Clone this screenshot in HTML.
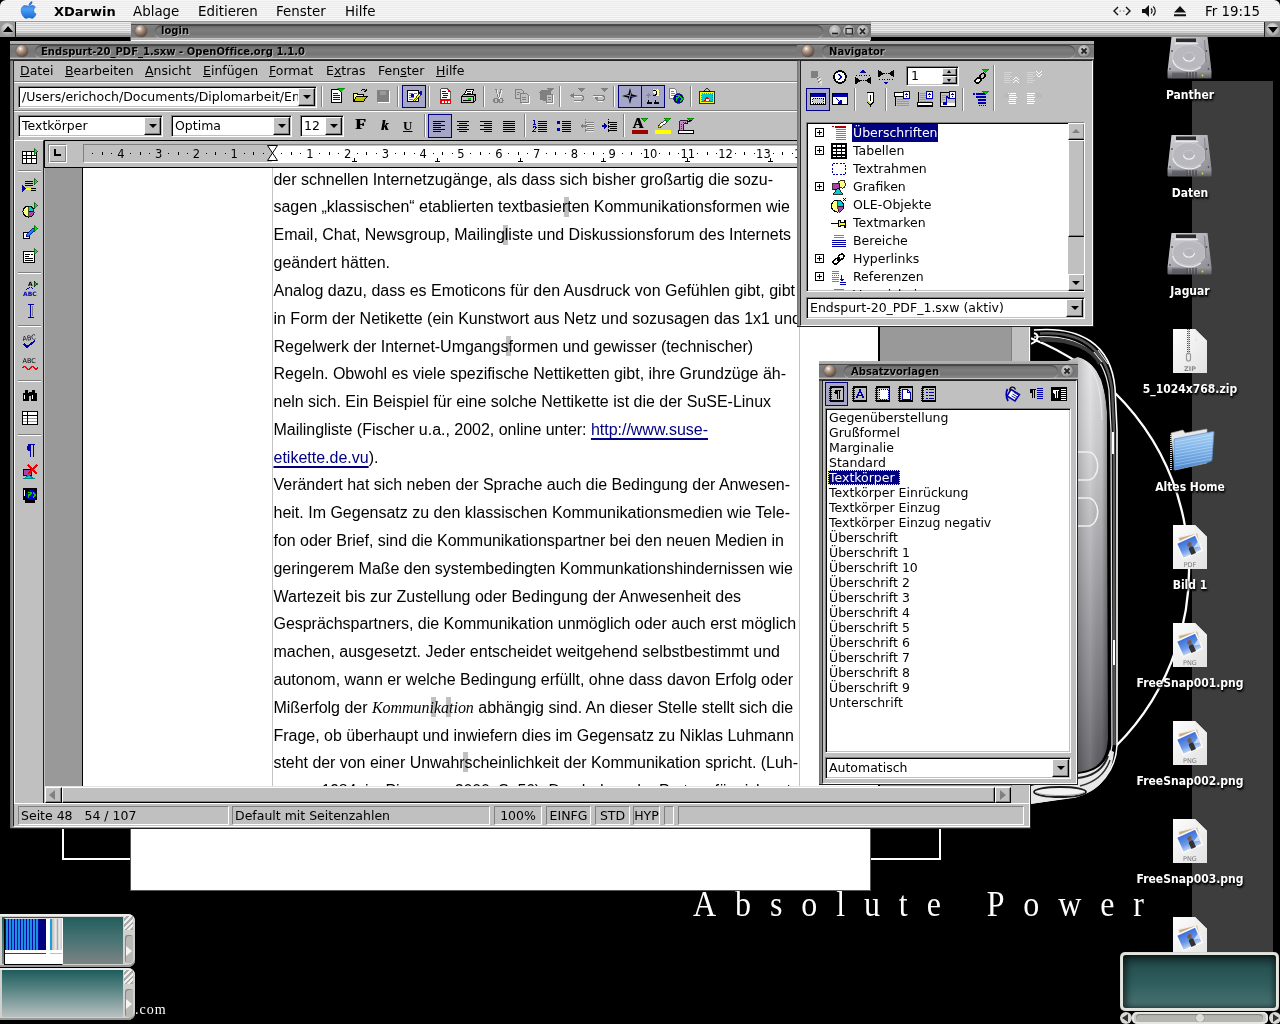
<!DOCTYPE html>
<html lang="de">
<head>
<meta charset="utf-8">
<title>XDarwin - OpenOffice.org 1.1.0</title>
<style>
*{box-sizing:border-box;margin:0;padding:0}
html,body{width:1280px;height:1024px;overflow:hidden;background:#000}
body{position:relative;font-family:"DejaVu Sans","Liberation Sans",sans-serif;font-size:13px;color:#000}
.a{position:absolute}
#main,#nav,#sty,#desk,#wall,#mbar,#login{will-change:transform}
.ui{font-family:"DejaVu Sans","Liberation Sans",sans-serif;font-size:12.5px;white-space:nowrap;line-height:16px}
.face{background:#c0c0c0}
.sunk{border:1px solid;border-color:#808080 #fff #fff #808080;box-shadow:inset 1px 1px 0 #000,inset -1px -1px 0 #c0c0c0;background:#fff}
.sunk1{border:1px solid;border-color:#808080 #fff #fff #808080}
.rais{border:1px solid;border-color:#fff #000 #000 #fff;box-shadow:inset -1px -1px 0 #808080;background:#c0c0c0}
.hsep{height:2px;border-top:1px solid #808080;border-bottom:1px solid #fff}
.vsep{width:2px;border-left:1px solid #808080;border-right:1px solid #fff}
.pressed{background:#a6a6c8;border:1px solid #000080}
.tbar{background:linear-gradient(#b4b4b4 0,#a8a8a8 3px,#4a4a4a 3px,#4a4a4a 4px,#808080 4px,#767676 10px,#7c7c7c 16px,#b0b0b0 17px,#c8c8c8 18px,#3c3c3c 18px,#3c3c3c 19px)}
.pill{background:linear-gradient(#6a6a6a,#7e7e7e 40%,#747474 70%,#8a8a8a);border-radius:7px;box-shadow:inset 0 1px 1px #444,0 1px 0 #c4c4c4}
.ttl{font-family:"DejaVu Sans","Liberation Sans",sans-serif;font-weight:bold;font-size:10px;line-height:12px;white-space:nowrap;color:#000;text-shadow:1px 1px 0 #b8b8b8;letter-spacing:.03px}
.ball{border-radius:50%;background:radial-gradient(circle at 36% 30%,#fff 0,#dccabc 12%,#a88e7e 34%,#6e5a4e 64%,#2e2420 100%);box-shadow:0 0 1px #222}
.xbtn{border-radius:50%;background:radial-gradient(circle at 40% 35%,#d8d8d8 0,#a8a8a8 50%,#5a5a5a 100%);box-shadow:0 0 1px #222}
.doc{font-family:"Liberation Sans",sans-serif;font-size:16px;line-height:28px;white-space:nowrap;color:#000}
.mm{font-family:"DejaVu Sans","Liberation Sans",sans-serif;font-size:13.4px;line-height:22px;white-space:nowrap;color:#000}
.lbl{font-family:"DejaVu Sans Condensed","DejaVu Sans","Liberation Sans",sans-serif;font-weight:bold;font-size:12px;line-height:14px;color:#fff;white-space:nowrap;text-align:center;text-shadow:1px 2px 2px #000,0 1px 1px #000}
</style>
</head>
<body>
<!-- WALLPAPER -->
<div id="wall" class="a" style="left:0;top:0;width:1280px;height:1024px;background:#000">
<div class="a" style="left:1192px;top:81px;width:81px;height:881px;background:#3d3d3d"></div>
<div class="a" style="left:62px;top:100px;width:879px;height:760px;border:2px solid #fff"></div>
<svg class="a" style="left:1020px;top:320px" width="200" height="520" viewBox="1020 320 200 520">
<defs>
<linearGradient id="dv" x1="0" x2="0" y1="0" y2="1"><stop offset="0" stop-color="#e2e2e4"/><stop offset=".2" stop-color="#d2d2d4"/><stop offset=".5" stop-color="#a8a8ac"/><stop offset=".8" stop-color="#7c7c82"/><stop offset="1" stop-color="#5c5c62"/></linearGradient>
<linearGradient id="dv2" gradientUnits="userSpaceOnUse" x1="1076" x2="1108" y1="0" y2="0"><stop offset="0" stop-color="#000" stop-opacity=".18"/><stop offset=".45" stop-color="#fff" stop-opacity=".12"/><stop offset=".8" stop-color="#000" stop-opacity=".05"/><stop offset="1" stop-color="#000" stop-opacity=".35"/></linearGradient>
</defs>
<path d="M1031 338.200 A249 249 0 0 1 1116 746" fill="none" stroke="#fff" stroke-width="2.300"/>
<path d="M1030 375 L1078 357 C1096 362 1105 380 1107 412 L1108 740 C1106 762 1096 770 1078 772 L1030 772 Z" fill="url(#dv)"/>
<path d="M1030 375 L1078 357 C1096 362 1105 380 1107 412 L1108 740 C1106 762 1096 770 1078 772 L1030 772 Z" fill="url(#dv2)"/>
<path d="M1084 361 C1098 372 1101 395 1102 420" fill="none" stroke="#f4f4f4" stroke-width="1" opacity=".7"/>
<path d="M1078 357 L1088 343 C1102 350 1112 366 1115 388 L1117 430 L1117 747 L1106 760 L1108 740 L1107 412 C1105 380 1096 362 1078 357 Z" fill="#000"/>
<!-- glass shell right edge -->
<path d="M1034 330 C1080 326 1111 344 1115 388 L1117 430 L1117 745 C1116 770 1100 790 1075 797 L1031 803" fill="none" stroke="#fff" stroke-width="1.600"/>
<path d="M1034 337 C1076 334 1103 349 1109 390 L1111 430 L1112 745 C1110 765 1098 778 1078 782" fill="none" stroke="#e0e0e0" stroke-width="1.300"/>
<path d="M1040 333.500 C1080 331 1106 347 1112 389 L1114 430 L1114.500 745" fill="none" stroke="#555" stroke-width="2.500"/>
<path d="M1113 432v22M1114 640v25" stroke="#fff" stroke-width="2"/>
<path d="M1034 333 q6 2 2 8 l-5 3" fill="none" stroke="#fff" stroke-width="2"/>
<path d="M1040 340 C1072 338 1094 350 1100 364" fill="none" stroke="#3a3a3a" stroke-width="4"/>
<path d="M1094 352 l8 10 M1098 350 l10 14" stroke="#ddd" stroke-width="1.200"/>
<path d="M1078 452 h10 a9 13 0 0 1 0 28 h-10 M1078 498 h10 a9 13 0 0 1 0 28 h-10" fill="none" stroke="#f0f0f0" stroke-width="1.500"/>
<!-- base -->
<path d="M1031 786 L1078 774 C1096 772 1106 764 1110 750 L1114 752 C1112 776 1098 792 1076 797 L1031 804 Z" fill="#e8e8e8"/>
<path d="M1078 778 C1094 776 1104 768 1108 756" fill="none" stroke="#222" stroke-width="2"/>
<path d="M1080 786 C1096 782 1106 772 1110 760" fill="none" stroke="#333" stroke-width="1.500"/>
<ellipse cx="1060" cy="792" rx="26" ry="5" fill="#f2f2f2" stroke="#1a1a1a" stroke-width="1.800"/>
<path d="M1036 792 a24 3.500 0 0 0 48 0" fill="none" stroke="#999" stroke-width="1"/>
</svg>
<div class="a" style="left:693px;top:880px;font-family:'Liberation Serif',serif;font-size:32px;line-height:44px;letter-spacing:18.900px;color:#fff;white-space:nowrap;transform:scaleY(1.1);transform-origin:0 0">Absolute Power</div>
<div class="a" style="left:135px;top:1002px;font-family:'Liberation Serif',serif;font-size:14px;line-height:16px;letter-spacing:1px;color:#fff">.com</div>
<!-- pager -->
<div class="a" style="left:0;top:914px;width:135px;height:53px;border-radius:0 7px 7px 0;background:#d0d0cc;box-shadow:inset 0 2px 0 #eee,inset 0 -2px 0 #999"></div>
<div class="a" style="left:2px;top:917px;width:121px;height:47px;background:linear-gradient(#235c5c,#4a7474 50%,#7d8383)"></div>
<div class="a" style="left:0;top:968px;width:135px;height:52px;border-radius:0 7px 7px 0;background:#d0d0cc;box-shadow:inset 0 2px 0 #eee,inset 0 -2px 0 #999"></div>
<div class="a" style="left:2px;top:970px;width:121px;height:47px;background:linear-gradient(#1f5c5c,#5f8888 45%,#b9c0c0)"></div>
<div class="a" style="left:4px;top:918px;width:59px;height:47px;background:#fff;border:1px solid #000;border-right-color:#fff;border-top-color:#ddd"></div>
<div class="a" style="left:5px;top:919px;width:34px;height:31px;background:repeating-linear-gradient(90deg,#0a0aa0 0,#0a0aa0 1.5px,#1e8ee0 1.5px,#1e8ee0 3px)"></div>
<div class="a" style="left:39px;top:919px;width:7px;height:31px;background:#000080"></div>
<div class="a" style="left:50px;top:919px;width:2px;height:31px;background:#19a0d8"></div>
<div class="a" style="left:52px;top:919px;width:10px;height:31px;background:linear-gradient(90deg,#bbb,#eee 40%,#aaa 55%,#eee 70%,#ccc)"></div>
<div class="a" style="left:5px;top:953px;width:41px;height:1px;background:#1840b0"></div>
<div class="a" style="left:50px;top:953px;width:12px;height:1px;background:#9cc"></div>
<div class="a" style="left:124px;top:916px;width:9px;height:14px;background:repeating-linear-gradient(135deg,#eee 0,#eee 2px,#aaa 2px,#aaa 4px)"></div>
<div class="a" style="left:124px;top:970px;width:9px;height:14px;background:repeating-linear-gradient(135deg,#eee 0,#eee 2px,#aaa 2px,#aaa 4px)"></div>
<div class="a" style="left:125px;top:935px;width:8px;height:28px;background:#b8b8b4;border-radius:3px;box-shadow:inset 1px 1px 0 #888"></div>
<div class="a" style="left:125px;top:989px;width:8px;height:28px;background:#b8b8b4;border-radius:3px;box-shadow:inset 1px 1px 0 #888"></div>
<div class="a" style="left:126px;top:946px;width:0;height:0;border:5px solid transparent;border-left:6px solid #f4f4f4;border-right:0"></div>
<div class="a" style="left:126px;top:999px;width:0;height:0;border:5px solid transparent;border-left:6px solid #f4f4f4;border-right:0"></div>
<!-- icon box bottom right -->
<div class="a" style="left:1120px;top:952px;width:159px;height:59px;border-radius:5px;background:#e4e4de;box-shadow:inset 0 0 1px #777"></div>
<div class="a" style="left:1123px;top:955px;width:153px;height:53px;border-radius:3px;background:linear-gradient(#142c2c,#275252 25%,#2f5e5e 55%,#4a7272);box-shadow:inset 4px 0 6px rgba(0,0,0,.5),inset -3px 0 5px rgba(0,0,0,.4)"></div>
<div class="a" style="left:1132px;top:1012px;width:136px;height:12px;border-radius:5px;background:#c8c8c4;box-shadow:inset 0 0 0 2px #e6e6e2"></div>
<div class="a" style="left:1136px;top:1014px;width:127px;height:8px;border-radius:4px;background:#b4b4b0;box-shadow:inset 0 1px 1px #777"></div>
<div class="a" style="left:1196px;top:1014px;width:8px;height:8px;border-radius:50%;background:#ddd;box-shadow:0 0 1px #555"></div>
<div class="a" style="left:1120px;top:1012px;width:12px;height:12px;border-radius:50%;background:#d8d8d4"></div>
<div class="a" style="left:1122px;top:1014px;width:0;height:0;border:4px solid transparent;border-right:6px solid #333;border-left:0"></div>
<div class="a" style="left:1269px;top:1012px;width:12px;height:12px;border-radius:50%;background:#d8d8d4"></div>
<div class="a" style="left:1273px;top:1014px;width:0;height:0;border:4px solid transparent;border-left:6px solid #333;border-right:0"></div>
</div>
<!-- LOGIN WINDOW -->
<div id="login" class="a" style="left:130px;top:22px;width:741px;height:869px;background:#fff;border:1px solid #555;border-top:0">
<div class="a tbar" style="left:0;top:0;width:740px;height:18px;background-position:0 -1px"></div>
<div class="a ball" style="left:4px;top:3px;width:12px;height:12px"></div>
<div class="a pill" style="left:24px;top:3px;width:668px;height:13px"></div>
<div class="a ttl" style="left:30px;top:3px">login</div>
<div class="a xbtn" style="left:698px;top:3px;width:12px;height:12px"></div>
<div class="a xbtn" style="left:712px;top:3px;width:12px;height:12px"></div>
<div class="a xbtn" style="left:726px;top:3px;width:12px;height:12px"></div>
<svg class="a" style="left:698px;top:3px" width="40" height="12" viewBox="0 0 40 12"><path d="M3 8.500h6" stroke="#222" stroke-width="1.600"/><rect x="17" y="3.500" width="6.500" height="5.500" fill="none" stroke="#222" stroke-width="1.200"/><path d="M31 3.500l5 5.500M36 3.500l-5 5.500" stroke="#222" stroke-width="1.800"/></svg>
</div>
<!-- MAIN WINDOW -->
<div id="main" class="a" style="left:0;top:0;width:0;height:0">
<div class="a " style="left:10px;top:41px;width:1021px;height:788px;background:linear-gradient(90deg,#6e6e6e,#9c9c9c 3px,#9c9c9c);box-shadow:inset -1px -1px 0 #222"></div>
<div class="a tbar" style="left:10px;top:41px;width:1021px;height:20px;"></div>
<div class="a ball" style="left:16px;top:45px;width:12px;height:12px;"></div>
<div class="a pill" style="left:35px;top:45px;width:988px;height:13px;"></div>
<div class="a ttl" style="left:41px;top:45.5px;">Endspurt-20_PDF_1.sxw - OpenOffice.org 1.1.0</div>
<div class="a face" style="left:13px;top:60px;width:1017px;height:767px;border:1px solid #222;border-right-color:#fff;border-bottom-color:#fff"></div>
<div class="a ui" style="left:20px;top:62.5px;"><u>D</u>atei</div>
<div class="a ui" style="left:65px;top:62.5px;"><u>B</u>earbeiten</div>
<div class="a ui" style="left:145px;top:62.5px;"><u>A</u>nsicht</div>
<div class="a ui" style="left:203px;top:62.5px;"><u>E</u>infügen</div>
<div class="a ui" style="left:269px;top:62.5px;"><u>F</u>ormat</div>
<div class="a ui" style="left:326px;top:62.5px;">E<u>x</u>tras</div>
<div class="a ui" style="left:378px;top:62.5px;">Fen<u>s</u>ter</div>
<div class="a ui" style="left:436px;top:62.5px;"><u>H</u>ilfe</div>
<div class="a hsep" style="left:14px;top:81px;width:1015px;height:2px;"></div>
<div class="a sunk" style="left:18px;top:86px;width:299px;height:22px;"></div><div class="a ui" style="left:22px;top:89px;width:276px;overflow:hidden">/Users/erichoch/Documents/Diplomarbeit/En</div><div class="a rais" style="left:298px;top:88px;width:17px;height:18px;"></div><div class="a" style="left:302.5px;top:95px;width:0;height:0;border:4px solid transparent;border-top:4px solid #000;border-bottom:0"></div>
<div class="a vsep" style="left:321px;top:86px;width:2px;height:21px;"></div>
<div class="a vsep" style="left:397px;top:86px;width:2px;height:21px;"></div>
<div class="a vsep" style="left:428px;top:86px;width:2px;height:21px;"></div>
<div class="a vsep" style="left:483px;top:86px;width:2px;height:21px;"></div>
<div class="a vsep" style="left:559px;top:86px;width:2px;height:21px;"></div>
<div class="a vsep" style="left:613px;top:86px;width:2px;height:21px;"></div>
<div class="a vsep" style="left:690px;top:86px;width:2px;height:21px;"></div>
<div class="a pressed" style="left:402px;top:85px;width:24px;height:23px;"></div>
<div class="a pressed" style="left:618px;top:85px;width:24px;height:23px;"></div>
<div class="a pressed" style="left:641px;top:85px;width:24px;height:23px;"></div>
<svg class="a" style="left:329px;top:88px" width="16" height="16" viewBox="0 0 16 16" shape-rendering="crispEdges"><path d="M2.500 1.500h7l3 3v10h-10z" fill="#fff" stroke="#000"/><path d="M4 5.500h5M4 7.500h7M4 9.500h7M4 11.500h7" stroke="#00f"/><path d="M8.500 0h7l-3.500 4z" fill="#0c0" stroke="#060" stroke-width=".5"/></svg>
<svg class="a" style="left:352px;top:88px" width="16" height="16" viewBox="0 0 16 16" shape-rendering="crispEdges"><path d="M1.500 13.500v-8.500h3.500l1 1.500h5.500v2.500" fill="#ffff80" stroke="#000"/><path d="M1.500 13.500l3-5h10.500l-3.500 5z" fill="#c0c000" stroke="#000"/><path d="M9 3c2-2 4-2 5 0m0 0v-2m0 2h-2" fill="none" stroke="#000"/></svg>
<svg class="a" style="left:375px;top:88px" width="16" height="16" viewBox="0 0 16 16" shape-rendering="crispEdges"><rect x="2" y="2" width="12" height="12" fill="#808080"/><path d="M14.500 3v11.500h-11.500" stroke="#fff" fill="none"/><path d="M5 3h6v4h-6z" fill="#999"/></svg>
<svg class="a" style="left:406px;top:88px" width="16" height="16" viewBox="0 0 16 16" shape-rendering="crispEdges"><path d="M1.500 2.500h11v11h-11z" fill="#fff" stroke="#000"/><path d="M3 5.500h4M3 7.500h3M3 9.500h5M3 11.500h7M8 5.500h3" stroke="#808080"/><rect x="5" y="6" width="3" height="3" fill="#00a"/><path d="M7.500 11.500l6-7 2 1.500-6 7-2.500 1z" fill="#ff0" stroke="#000" stroke-width=".7"/><path d="M12.500 5.500l2.500-3 1.500 1.500-2 3z" fill="#00c"/></svg>
<svg class="a" style="left:437px;top:88px" width="16" height="16" viewBox="0 0 16 16" shape-rendering="crispEdges"><path d="M3.500 .5h7l3 3v12h-10z" fill="#fff" stroke="#000" stroke-width=".6"/><path d="M5 3.500h4M5 5.500h6M6 7.500h5M5 9.500h5" stroke="#00f"/><path d="M3.200 11h10.600v4.800h-10.600z" fill="#e00"/><path d="M4.500 12.500h2v2h-2zM7.500 12.500h2v2h-2zM10.500 12.500h2v2h-2z" fill="#fff"/><path d="M10.500 .5v3h3z" fill="#e00"/></svg>
<svg class="a" style="left:460px;top:88px" width="16" height="16" viewBox="0 0 16 16" shape-rendering="crispEdges"><path d="M4.500 6.500l2-5h7l-1.500 5z" fill="#fff" stroke="#000"/><path d="M7 3.500h4M6.500 5h4" stroke="#00f"/><path d="M1.500 8.500l2-2h11l1 2v4l-2 2h-12z" fill="#c0c0c0" stroke="#000"/><path d="M1.500 8.500h12v6M13.500 8.500l2-2" fill="none" stroke="#000"/><rect x="8" y="10" width="3" height="1.500" fill="#0c0"/><path d="M3 12.500h8" stroke="#000"/></svg>
<svg class="a" style="left:490px;top:88px" width="16" height="16" viewBox="0 0 16 16" shape-rendering="crispEdges"><path d="M6 1l2.500 9M11 1l-2.500 9" stroke="#808080" stroke-width="1.300" fill="none"/><circle cx="6" cy="12.500" r="2" fill="none" stroke="#808080" stroke-width="1.300"/><circle cx="11" cy="12.500" r="2" fill="none" stroke="#808080" stroke-width="1.300"/><path d="M7 2l2.500 9M12 2l-2.500 9" stroke="#fff" stroke-width=".8" fill="none"/></svg>
<svg class="a" style="left:514px;top:88px" width="16" height="16" viewBox="0 0 16 16" shape-rendering="crispEdges"><path d="M1.500 1.500h6l2 2v7h-8z" fill="#c0c0c0" stroke="#808080"/><path d="M6.500 5.500h6l2 2v7h-8z" fill="#c0c0c0" stroke="#808080"/><path d="M8 9.500h4M8 11.500h4M3 4.500h3M3 6.500h2" stroke="#808080"/><path d="M15.500 8v7.500h-8" stroke="#fff" fill="none"/></svg>
<svg class="a" style="left:538px;top:88px" width="16" height="16" viewBox="0 0 16 16" shape-rendering="crispEdges"><path d="M1.500 4.500c0-2 2-3 4-3h4l3 3v8h-8c-2 0-3-1-3-3z" fill="#808080"/><path d="M8.500 6.500h6v8h-6z" fill="#c0c0c0" stroke="#808080"/><path d="M10 9.500h3M10 11.500h3" stroke="#808080"/><path d="M9 0h7l-3.500 4z" fill="#808080"/><path d="M15.500 7v8.500h-7" stroke="#fff" fill="none"/></svg>
<svg class="a" style="left:569px;top:88px" width="16" height="16" viewBox="0 0 16 16" shape-rendering="crispEdges"><path d="M4 7.500h8a2.500 2.500 0 0 1 0 5h-7" fill="none" stroke="#808080" stroke-width="1.500"/><path d="M5 4.500l-4 3 4 3z" fill="#808080"/><path d="M9 0h7l-3.500 4z" fill="#808080"/><path d="M5 8.800h8M5 13.800h7" stroke="#fff" stroke-width=".8"/></svg>
<svg class="a" style="left:592px;top:88px" width="16" height="16" viewBox="0 0 16 16" shape-rendering="crispEdges"><path d="M1 7.500h9a2.500 2.500 0 0 1 0 5h-5" fill="none" stroke="#808080" stroke-width="1.500"/><path d="M6 9.500l-4 3 4 3z" fill="#808080" transform="translate(0,-2.500)"/><path d="M9 0h7l-3.500 4z" fill="#808080"/><path d="M1 8.800h9M6 13.800h5" stroke="#fff" stroke-width=".8"/></svg>
<svg class="a" style="left:622px;top:88px" width="16" height="16" viewBox="0 0 16 16" shape-rendering="crispEdges"><g shape-rendering="geometricPrecision"><path d="M8 0l1.700 6.300 6.300 1.700-6.300 1.700-1.700 6.300-1.700-6.300-6.300-1.700 6.300-1.700z" fill="#000"/><path d="M8 2.500l.7 4.800-0.700.7zM8 13.500l-.7-4.800.7-.7zM2.500 8l4.800-.7.700.7zM13.500 8l-4.800.7-.7-.7z" fill="#fff"/><path d="M8 8l.7.700 4.800-.7z" fill="#00a"/></g></svg>
<svg class="a" style="left:645px;top:88px" width="16" height="16" viewBox="0 0 16 16" shape-rendering="crispEdges"><path d="M7 1h7v7h-3l-2-2z" fill="#ffffa0" stroke="#888" stroke-width=".6" stroke-dasharray="1 1"/><path d="M8 3c2-1 4 0 4 2l-2 3-1.500-1" fill="none" stroke="#000" stroke-width="1.200"/><path d="M2 8l2.500-2.500M4.500 8l-2.500-2.500M3.200 4.500v5M.8 7h5" stroke="#808080" stroke-width=".8"/><path d="M2 15.500h5v-2h-1v-2h-3v2h-1zM9 15.500h5v-2h-1v-2h-3v2h-1z" fill="#000"/><path d="M3.500 12h2v2h-2zM10.500 12h2v2h-2z" fill="#aac"/></svg>
<svg class="a" style="left:668px;top:88px" width="16" height="16" viewBox="0 0 16 16" shape-rendering="crispEdges"><path d="M1.500 .5h5l2 2v8h-7z" fill="#fff" stroke="#808080"/><path d="M3 3.500h3M3 5.500h4M3 7.500h4" stroke="#808080"/><circle cx="10.500" cy="10.500" r="4.800" fill="#00c" stroke="#000" stroke-width=".6"/><path d="M8 8c1-1 3-1 3 0s-1 2-2 2-1 2 0 3M12 9c1 0 2 1 2 2s-1 2-2 3" fill="none" stroke="#0c0" stroke-width="1.600"/></svg>
<svg class="a" style="left:699px;top:88px" width="16" height="16" viewBox="0 0 16 16" shape-rendering="crispEdges"><path d="M8 0l4 3.500h-8z" fill="none" stroke="#000" stroke-width=".8"/><rect x=".8" y="3.800" width="14.400" height="11.400" fill="#ff0" stroke="#000" stroke-width=".8"/><rect x="2.500" y="5.500" width="11" height="8" fill="#0cc" stroke="#a00" stroke-width=".6" stroke-dasharray="1 1"/><path d="M4 13.500l4-5 4 5z" fill="#e00"/><path d="M6.500 13.500v-2.500h3v2.500z" fill="#fff"/><path d="M2.500 13.500h11" stroke="#0a0"/></svg>
<div class="a hsep" style="left:14px;top:110px;width:1015px;height:2px;"></div>
<div class="a sunk" style="left:18px;top:115px;width:145px;height:22px;"></div><div class="a ui" style="left:22px;top:118px;width:122px;overflow:hidden">Textkörper</div><div class="a rais" style="left:144px;top:117px;width:17px;height:18px;"></div><div class="a" style="left:148.5px;top:124px;width:0;height:0;border:4px solid transparent;border-top:4px solid #000;border-bottom:0"></div>
<div class="a sunk" style="left:171px;top:115px;width:121px;height:22px;"></div><div class="a ui" style="left:175px;top:118px;width:98px;overflow:hidden">Optima</div><div class="a rais" style="left:273px;top:117px;width:17px;height:18px;"></div><div class="a" style="left:277.5px;top:124px;width:0;height:0;border:4px solid transparent;border-top:4px solid #000;border-bottom:0"></div>
<div class="a sunk" style="left:300px;top:115px;width:44px;height:22px;"></div><div class="a ui" style="left:304px;top:118px;width:21px;overflow:hidden">12</div><div class="a rais" style="left:325px;top:117px;width:17px;height:18px;"></div><div class="a" style="left:329.5px;top:124px;width:0;height:0;border:4px solid transparent;border-top:4px solid #000;border-bottom:0"></div>
<div class="a " style="left:355px;top:115px;font:bold 14px/20px 'Liberation Serif',serif;text-shadow:.6px 0 0 #000;transform:scaleX(1.25);transform-origin:0 0">F</div>
<div class="a " style="left:381px;top:115px;font:italic bold 15px/20px 'Liberation Serif',serif;text-shadow:.4px 0 0 #000">k</div>
<div class="a " style="left:403px;top:115.5px;font:bold 13px/20px 'Liberation Serif',serif;text-decoration:underline">U</div>
<div class="a vsep" style="left:424px;top:114px;width:2px;height:23px;"></div>
<div class="a vsep" style="left:524px;top:114px;width:2px;height:23px;"></div>
<div class="a vsep" style="left:623px;top:114px;width:2px;height:23px;"></div>
<div class="a pressed" style="left:428px;top:114px;width:24px;height:24px;"></div>
<svg class="a" style="left:432px;top:118px" width="16" height="16" viewBox="0 0 16 16" shape-rendering="crispEdges"><path d="M1 3.500h12M1 5.500h8M1 7.500h12M1 9.500h8M1 11.500h12M1 13.500h8" stroke="#000"/></svg>
<svg class="a" style="left:455px;top:118px" width="16" height="16" viewBox="0 0 16 16" shape-rendering="crispEdges"><path d="M2 3.500h12M4 5.500h8M2 7.500h12M4 9.500h8M2 11.500h12M4 13.500h8" stroke="#000"/></svg>
<svg class="a" style="left:478px;top:118px" width="16" height="16" viewBox="0 0 16 16" shape-rendering="crispEdges"><path d="M2 3.500h12M6 5.500h8M2 7.500h12M6 9.500h8M2 11.500h12M6 13.500h8" stroke="#000"/></svg>
<svg class="a" style="left:501px;top:118px" width="16" height="16" viewBox="0 0 16 16" shape-rendering="crispEdges"><path d="M2 3.500h12M2 5.500h12M2 7.500h12M2 9.500h12M2 11.500h12M2 13.500h12" stroke="#000"/></svg>
<svg class="a" style="left:532px;top:118px" width="16" height="16" viewBox="0 0 16 16" shape-rendering="crispEdges"><path d="M6 3.500h9M6 5.500h9M6 7.500h9M6 9.500h9M6 11.500h9M6 13.500h9" stroke="#000"/><path d="M2.500 2v4.500M1.500 3l1-1M1 6.500h3M1 9.500c.5-1.500 3-1.500 3 0 0 1-3 2.500-3 4h3.200" fill="none" stroke="#00a" stroke-width="1.100"/></svg>
<svg class="a" style="left:556px;top:118px" width="16" height="16" viewBox="0 0 16 16" shape-rendering="crispEdges"><path d="M6 3.500h9M6 5.500h9M6 7.500h9M6 9.500h9M6 11.500h9M6 13.500h9" stroke="#000"/><circle cx="2.500" cy="4.500" r="1.700" fill="#00a"/><circle cx="2.500" cy="11.500" r="1.700" fill="#00a"/></svg>
<svg class="a" style="left:579px;top:118px" width="16" height="16" viewBox="0 0 16 16" shape-rendering="crispEdges"><path d="M6 4.500h9M8 6.500h7M6 8.500h9M8 10.500h7M6 12.500h9" stroke="#808080"/><path d="M6.500 1v14" stroke="#808080" stroke-dasharray="1 1"/><path d="M1 8l3-3v2h4v2h-4v2z" fill="#808080"/><path d="M7 5.800h8M9 7.800h6M7 9.800h8M9 11.800h6M7 13.800h8" stroke="#fff" stroke-width=".6"/></svg>
<svg class="a" style="left:602px;top:118px" width="16" height="16" viewBox="0 0 16 16" shape-rendering="crispEdges"><path d="M6 4.500h9M8 6.500h7M6 8.500h9M8 10.500h7M6 12.500h9" stroke="#000"/><path d="M6.500 1v14" stroke="#000" stroke-dasharray="1 1"/><path d="M5 8l-3-3v2h-2v2h2v2z" fill="#00a"/></svg>
<svg class="a" style="left:632px;top:118px" width="16" height="16" viewBox="0 0 16 16" shape-rendering="crispEdges"><path d="M9 0h7l-3.500 4z" fill="#0c0" stroke="#060" stroke-width=".5"/><rect x="0" y="12" width="16" height="4" fill="#a00000"/></svg>
<svg class="a" style="left:655px;top:118px" width="16" height="16" viewBox="0 0 16 16" shape-rendering="crispEdges"><path d="M9 0h7l-3.500 4z" fill="#0c0" stroke="#060" stroke-width=".5"/><rect x="0" y="12" width="16" height="4" fill="#ff0"/><path d="M3 10l1-3 6-5 2 2-6 5z" fill="#fff" stroke="#000" stroke-width=".7"/><path d="M3 10l1-3 2 2z" fill="#ff0" stroke="#000" stroke-width=".5"/></svg>
<svg class="a" style="left:678px;top:118px" width="16" height="16" viewBox="0 0 16 16" shape-rendering="crispEdges"><path d="M9 0h7l-3.500 4z" fill="#0c0" stroke="#060" stroke-width=".5"/><rect x=".5" y="12.500" width="15" height="3" fill="#fff" stroke="#000"/><path d="M1.500 2.500h8v3h-4v7h-4z" fill="#c8c" stroke="#000" stroke-width=".8"/><path d="M3 6v5M5 4h4" stroke="#808" stroke-dasharray="1 1"/><path d="M9.500 4l4-2" stroke="#000"/></svg>
<div class="a " style="left:632.5px;top:114px;font:bold 15px/18px 'Liberation Serif',serif;text-shadow:.4px 0 0 #000">A</div>
<div class="a " style="left:14px;top:138px;width:1015px;height:2px;background:#c0c0c0"></div>
<div class="a face" style="left:14px;top:140px;width:30px;height:664px;border-left:1px solid #fff;border-top:1px solid #fff;border-right:1px solid #222"></div>
<svg class="a" style="left:22px;top:148px" width="16" height="16" viewBox="0 0 16 16" shape-rendering="crispEdges"><rect x=".8" y="3.800" width="13.400" height="11.400" fill="#fff" stroke="#000" stroke-width="1.300"/><path d="M1 7.500h13M1 10.500h13M4.500 4v11M9.500 4v11" stroke="#000" stroke-width="1.200"/><path d="M12 .5l3.500 3-3.500 3z" fill="#0e0" stroke="#030" stroke-width=".6"/></svg>
<svg class="a" style="left:22px;top:178px" width="16" height="16" viewBox="0 0 16 16" shape-rendering="crispEdges"><path d="M3 3.500h8M3 5.500h8M3 7.500h8M9 10.500h5M9 12.500h5" stroke="#000"/><path d="M0 7l3.500 3.500-3.500 3.500z" fill="#00a"/><rect x="4" y="9.500" width="5" height="2" fill="#ff0"/><path d="M12 .5l3.500 3-3.500 3z" fill="#0e0" stroke="#030" stroke-width=".6"/></svg>
<svg class="a" style="left:22px;top:202px" width="16" height="16" viewBox="0 0 16 16" shape-rendering="crispEdges"><circle cx="6.500" cy="9.500" r="5.500" fill="#ffff80" stroke="#000"/><path d="M6.500 9.500v-5.500a5.500 5.500 0 0 1 5.500 5.500z" fill="#0cc" stroke="#000" stroke-width=".7"/><path d="M6.500 9.500h5.500a5.500 5.500 0 0 1-5 5.500z" fill="#a4a" stroke="#000" stroke-width=".7"/><path d="M12 .5l3.500 3-3.500 3z" fill="#0e0" stroke="#030" stroke-width=".6"/></svg>
<svg class="a" style="left:22px;top:225px" width="16" height="16" viewBox="0 0 16 16" shape-rendering="crispEdges"><rect x="1.500" y="7.500" width="6" height="6" fill="#fff" stroke="#000"/><path d="M4 12l1-3 6-6 2 2-6 6z" fill="#08f" stroke="#008" stroke-width=".8"/><path d="M12 .5l3.500 3-3.500 3z" fill="#0e0" stroke="#030" stroke-width=".6"/></svg>
<svg class="a" style="left:22px;top:248px" width="16" height="16" viewBox="0 0 16 16" shape-rendering="crispEdges"><rect x="1.500" y="3.500" width="11" height="11" fill="#fff" stroke="#000" stroke-width="1.300"/><path d="M3 6.500h5M3 8.500h4M3 10.500h8M3 12.500h8M9 6.500h2" stroke="#000"/><path d="M12 .5l3.500 3-3.500 3z" fill="#0e0" stroke="#030" stroke-width=".6"/></svg>
<svg class="a" style="left:22px;top:280px" width="16" height="16" viewBox="0 0 16 16" shape-rendering="crispEdges"><text x="6" y="6" font-size="6" font-family="DejaVu Sans" font-weight="bold" fill="#000">A</text><path d="M12 1l3.500 3-3.500 3z" fill="#0d0" stroke="#000" stroke-width=".6"/><path d="M8 7l-4 3M9 7l3 3" stroke="#00a" stroke-dasharray="1 1"/><text x="1" y="15.500" font-size="6" font-family="DejaVu Sans" font-weight="bold" fill="#00a">ABC</text></svg>
<svg class="a" style="left:22px;top:303px" width="16" height="16" viewBox="0 0 16 16" shape-rendering="crispEdges"><path d="M5.500 1.500h2c1 0 1 1 1 1s0-1 1-1h2M5.500 14.500h2c1 0 1-1 1-1s0 1 1 1h2M8.500 2.500v11" fill="none" stroke="#00a" stroke-width="1.100"/><path d="M10.500 3v10" stroke="#808080"/></svg>
<svg class="a" style="left:22px;top:333px" width="16" height="16" viewBox="0 0 16 16" shape-rendering="crispEdges"><text x=".5" y="7" font-size="6.500" font-family="DejaVu Sans" fill="#000" transform="rotate(-8 8 5)">ABC</text><path d="M2 11l3 3 8-6" fill="none" stroke="#00a" stroke-width="1.800"/></svg>
<svg class="a" style="left:22px;top:356px" width="16" height="16" viewBox="0 0 16 16" shape-rendering="crispEdges"><text x=".5" y="7" font-size="6.500" font-family="DejaVu Sans" fill="#000">ABC</text><path d="M.5 12q2-3 4 0t4 0 4 0 3-1" fill="none" stroke="#e00" stroke-width="1.200"/></svg>
<svg class="a" style="left:22px;top:387px" width="16" height="16" viewBox="0 0 16 16" shape-rendering="crispEdges"><path d="M3 6v-3h3v3M10 6v-3h3v3" fill="#000"/><rect x="1" y="6" width="6" height="8" rx="1.500" fill="#000"/><rect x="9" y="6" width="6" height="8" rx="1.500" fill="#000"/><rect x="6.500" y="5" width="3" height="4" fill="#000"/><path d="M2.500 8v4M10.500 8v4" stroke="#fff"/></svg>
<svg class="a" style="left:22px;top:410px" width="16" height="16" viewBox="0 0 16 16" shape-rendering="crispEdges"><rect x=".8" y="1.800" width="14.400" height="12.400" fill="#fff" stroke="#000" stroke-width="1.300"/><path d="M1 5.500h14M5.500 2v12" stroke="#000" stroke-width="1.200"/><path d="M6 8.500h9M6 11.500h9M1 8.500h4M1 11.500h4" stroke="#999"/></svg>
<svg class="a" style="left:22px;top:442px" width="16" height="16" viewBox="0 0 16 16" shape-rendering="crispEdges"><path d="M6 2.500h7M8.500 2.500v12M11.500 2.500v12" stroke="#00a" stroke-width="1.300" fill="none"/><path d="M8.500 2.500a3 3 0 0 0 0 6z" fill="#00a" stroke="#00a"/></svg>
<svg class="a" style="left:22px;top:464px" width="16" height="16" viewBox="0 0 16 16" shape-rendering="crispEdges"><rect x="1.500" y="5.500" width="8" height="6" fill="#a4a" stroke="#000"/><path d="M1 14.500h12M3 14l4-3 4 3z" fill="#0cc" stroke="#088"/><path d="M6 1l9 9M15 1l-9 9" stroke="#e00" stroke-width="1.600"/></svg>
<svg class="a" style="left:22px;top:487px" width="16" height="16" viewBox="0 0 16 16" shape-rendering="crispEdges"><rect x=".8" y=".8" width="14.400" height="12.400" rx="1" fill="#000"/><rect x="3" y="13" width="10" height="2.500" fill="#000"/><circle cx="9" cy="8" r="5" fill="#00c"/><path d="M6 6c1-1 3-1 3 0s-1 2-2 2-1 2 0 3M11 6c1 0 2 1 2 2s-1 2-2 3" fill="none" stroke="#0c0" stroke-width="1.600"/><path d="M2.500 3v6" stroke="#fff"/></svg>
<div class="a hsep" style="left:18px;top:170px;width:23px;height:2px;"></div>
<div class="a hsep" style="left:18px;top:272px;width:23px;height:2px;"></div>
<div class="a hsep" style="left:18px;top:325px;width:23px;height:2px;"></div>
<div class="a hsep" style="left:18px;top:380px;width:23px;height:2px;"></div>
<div class="a hsep" style="left:18px;top:434px;width:23px;height:2px;"></div>
<div class="a face" style="left:44px;top:140px;width:985px;height:28px;border-top:1px solid #000;border-bottom:1px solid #000;border-left:1px solid #000"></div>
<div class="a face" style="left:48px;top:144px;width:19px;height:19px;border:1px solid;border-color:#808080 #fff #fff #808080;box-shadow:inset 1px 1px 0 #fff,inset -1px -1px 0 #808080"></div>
<svg class="a" style="left:54px;top:149px" width="8" height="8"><path d="M1 0v6h6" fill="none" stroke="#000" stroke-width="2"/></svg>
<div class="a face" style="left:83px;top:144px;width:928px;height:19px;border:1px solid;border-color:#808080 #fff #fff #808080"></div>
<div class="a " style="left:272px;top:146px;width:526px;height:16px;background:#fff"></div>
<svg class="a" style="left:0;top:140px" width="1011" height="28" viewBox="0 140 1011 28" font-family="DejaVu Sans, Liberation Sans, sans-serif" font-size="11.500" fill="#000"><path d="M92.5 153.0v1M102.5 152.0v3M111.5 153.0v1M130.5 153.0v1M140.5 152.0v3M149.5 153.0v1M168.5 153.0v1M178.5 152.0v3M187.5 153.0v1M206.5 153.0v1M215.5 152.0v3M225.5 153.0v1M244.5 153.0v1M253.5 152.0v3M263.5 153.0v1M281.5 153.0v1M291.5 152.0v3M300.5 153.0v1M319.5 153.0v1M329.5 152.0v3M338.5 153.0v1M357.5 153.0v1M366.5 152.0v3M376.5 153.0v1M395.5 153.0v1M404.5 152.0v3M414.5 153.0v1M433.5 153.0v1M442.5 152.0v3M452.5 153.0v1M470.5 153.0v1M480.5 152.0v3M489.5 153.0v1M508.5 153.0v1M518.5 152.0v3M527.5 153.0v1M546.5 153.0v1M555.5 152.0v3M565.5 153.0v1M584.5 153.0v1M593.5 152.0v3M603.5 153.0v1M622.5 153.0v1M631.5 152.0v3M641.5 153.0v1M659.5 153.0v1M669.5 152.0v3M678.5 153.0v1M697.5 153.0v1M707.5 152.0v3M716.5 153.0v1M735.5 153.0v1M744.5 152.0v3M754.5 153.0v1M773.5 153.0v1M782.5 152.0v3M792.5 153.0v1M811.5 153.0v1M820.5 152.0v3M830.5 153.0v1" stroke="#000" stroke-width="1" fill="none"/><path d="M354.5 158v3.500M352.0 161.500h5M437.5 158v3.500M435.0 161.500h5M520.5 158v3.500M518.0 161.500h5M603.5 158v3.500M601.0 161.500h5M687.5 158v3.500M685.0 161.500h5M770.5 158v3.500M768.0 161.500h5M853.5 158v3.500M851.0 161.500h5" stroke="#000" stroke-width="1" fill="none"/><text x="120.8" y="157.500" text-anchor="middle">4</text><text x="158.6" y="157.500" text-anchor="middle">3</text><text x="196.4" y="157.500" text-anchor="middle">2</text><text x="234.2" y="157.500" text-anchor="middle">1</text><text x="309.8" y="157.500" text-anchor="middle">1</text><text x="347.6" y="157.500" text-anchor="middle">2</text><text x="385.4" y="157.500" text-anchor="middle">3</text><text x="423.2" y="157.500" text-anchor="middle">4</text><text x="461.0" y="157.500" text-anchor="middle">5</text><text x="498.8" y="157.500" text-anchor="middle">6</text><text x="536.6" y="157.500" text-anchor="middle">7</text><text x="574.4" y="157.500" text-anchor="middle">8</text><text x="612.2" y="157.500" text-anchor="middle">9</text><text x="650.0" y="157.500" text-anchor="middle">10</text><text x="687.8" y="157.500" text-anchor="middle">11</text><text x="725.6" y="157.500" text-anchor="middle">12</text><text x="763.4" y="157.500" text-anchor="middle">13</text><text x="801.2" y="157.500" text-anchor="middle">14</text><path d="M267.500 145.500h10l-5 7.500 5 7.500h-10l5-7.500z" fill="#fff" stroke="#000"/></svg>
<div class="a" style="left:45px;top:168px;width:966px;height:618px;background:#999;overflow:hidden">
<div class="a " style="left:37px;top:-10px;width:798px;height:640px;background:#fff;border-left:1px solid #000;border-right:2px solid #000"></div>
<div class="a " style="left:227px;top:-10px;width:1px;height:640px;background:#c4c4c4"></div>
<div class="a " style="left:754px;top:-10px;width:1px;height:640px;background:#c4c4c4"></div>
<div class="a " style="left:519px;top:29px;width:5px;height:20px;background:#c0c0c0"></div>
<div class="a " style="left:458px;top:57px;width:5px;height:20px;background:#c0c0c0"></div>
<div class="a " style="left:461px;top:168px;width:5px;height:20px;background:#c0c0c0"></div>
<div class="a " style="left:386px;top:529px;width:5px;height:20px;background:#c0c0c0"></div>
<div class="a " style="left:401px;top:529px;width:5px;height:20px;background:#c0c0c0"></div>
<div class="a " style="left:418px;top:584px;width:5px;height:20px;background:#c0c0c0"></div>
<div class="a doc" id="l0" style="left:228.5px;top:-2.2px;letter-spacing:-0.030px;">der schnellen Internetzugänge, als dass sich bisher großartig die sozu-</div>
<div class="a doc" id="l1" style="left:228.5px;top:24.8px;letter-spacing:-0.016px;">sagen „klassischen“ etablierten textbasierten Kommunikationsformen wie</div>
<div class="a doc" id="l2" style="left:228.5px;top:52.8px;letter-spacing:-0.025px;">Email, Chat, Newsgroup, Mailingliste und Diskussionsforum des Internets</div>
<div class="a doc" id="l3" style="left:228.5px;top:80.9px;">geändert hätten.</div>
<div class="a doc" id="l4" style="left:228.5px;top:108.9px;letter-spacing:0.004px;">Analog dazu, dass es Emoticons für den Ausdruck von Gefühlen gibt, gibt</div>
<div class="a doc" id="l5" style="left:228.5px;top:136.9px;letter-spacing:-0.011px;">in Form der Netikette (ein Kunstwort aus Netz und sozusagen das 1x1 und</div>
<div class="a doc" id="l6" style="left:228.5px;top:164.9px;letter-spacing:-0.025px;">Regelwerk der Internet-Umgangsformen und gewisser (technischer)</div>
<div class="a doc" id="l7" style="left:228.5px;top:191.9px;letter-spacing:-0.022px;">Regeln. Obwohl es viele spezifische Nettiketten gibt, ihre Grundzüge äh-</div>
<div class="a doc" id="l8" style="left:228.5px;top:219.9px;letter-spacing:-0.019px;">neln sich. Ein Beispiel für eine solche Nettikette ist die der SuSE-Linux</div>
<div class="a doc" id="l9" style="left:228.5px;top:247.9px;letter-spacing:-0.020px;">Mailingliste (Fischer u.a., 2002, online unter: <span style="color:#000080;text-decoration:underline;text-decoration-thickness:1.500px;text-underline-offset:2.500px">http://www.suse-</span></div>
<div class="a doc" id="l10" style="left:228.5px;top:275.9px;"><span style="color:#000080;text-decoration:underline;text-decoration-thickness:1.500px;text-underline-offset:2.500px">etikette.de.vu</span>).</div>
<div class="a doc" id="l11" style="left:228.5px;top:302.9px;letter-spacing:-0.018px;">Verändert hat sich neben der Sprache auch die Bedingung der Anwesen-</div>
<div class="a doc" id="l12" style="left:228.5px;top:330.9px;letter-spacing:0.001px;">heit. Im Gegensatz zu den klassischen Kommunikationsmedien wie Tele-</div>
<div class="a doc" id="l13" style="left:228.5px;top:358.9px;letter-spacing:-0.039px;">fon oder Brief, sind die Kommunikationspartner bei den neuen Medien in</div>
<div class="a doc" id="l14" style="left:228.5px;top:386.9px;letter-spacing:-0.026px;">geringerem Maße den systembedingten Kommunkationshindernissen wie</div>
<div class="a doc" id="l15" style="left:228.5px;top:414.9px;letter-spacing:0.005px;">Wartezeit bis zur Zustellung oder Bedingung der Anwesenheit des</div>
<div class="a doc" id="l16" style="left:228.5px;top:441.9px;letter-spacing:-0.032px;">Gesprächspartners, die Kommunikation unmöglich oder auch erst möglich</div>
<div class="a doc" id="l17" style="left:228.5px;top:469.9px;letter-spacing:-0.007px;">machen, ausgesetzt. Jeder entscheidet weitgehend selbstbestimmt und</div>
<div class="a doc" id="l18" style="left:228.5px;top:497.9px;letter-spacing:-0.011px;">autonom, wann er welche Bedingung erfüllt, ohne dass davon Erfolg oder</div>
<div class="a doc" id="l19" style="left:228.5px;top:525.9px;letter-spacing:-0.021px;">Mißerfolg der <span style="font:italic 16px 'Liberation Serif',serif">Kommunikation</span> abhängig sind. An dieser Stelle stellt sich die</div>
<div class="a doc" id="l20" style="left:228.5px;top:553.9px;letter-spacing:-0.023px;">Frage, ob überhaupt und inwiefern dies im Gegensatz zu Niklas Luhmann</div>
<div class="a doc" id="l21" style="left:228.5px;top:580.9px;letter-spacing:-0.040px;">steht der von einer Unwahrscheinlichkeit der Kommunikation spricht. (Luh-</div>
<div class="a doc" id="l22" style="left:228.5px;top:608.9px;letter-spacing:-0.168px;">mann, 1984; in: Pias u.a., 2000, S. 56). Durch dass der Partner für sich ent-</div>
</div>
<div class="a face" style="left:1011px;top:168px;width:18px;height:618px;border-left:1px solid #808080"></div>
<div class="a " style="left:45px;top:786px;width:966px;height:17px;border-top:1px solid #e4e4e4;background:#c0c0c0"></div>
<div class="a rais" style="left:45px;top:787px;width:17px;height:16px;"></div>
<div class="a" style="left:49px;top:790px;width:0;height:0;border:5px solid transparent;border-right:6px solid #808080;border-left:0"></div>
<div class="a rais" style="left:62px;top:787px;width:933px;height:16px;"></div>
<div class="a rais" style="left:995px;top:787px;width:16px;height:16px;"></div>
<div class="a" style="left:1000px;top:790px;width:0;height:0;border:5px solid transparent;border-left:6px solid #808080;border-right:0"></div>
<div class="a face" style="left:1011px;top:786px;width:18px;height:17px;"></div>
<div class="a " style="left:14px;top:803px;width:1015px;height:1px;background:#fff"></div>
<div class="a sunk1" style="left:18px;top:806px;width:211px;height:19px;"><div class="ui" style="padding:1px 2px;">Seite 48&nbsp;&nbsp; 54 / 107</div></div>
<div class="a sunk1" style="left:232px;top:806px;width:258px;height:19px;"><div class="ui" style="padding:1px 2px;">Default mit Seitenzahlen</div></div>
<div class="a sunk1" style="left:494px;top:806px;width:48px;height:19px;"><div class="ui" style="padding:1px 2px;text-align:center;padding-left:0;padding-right:0">100%</div></div>
<div class="a sunk1" style="left:546px;top:806px;width:45px;height:19px;"><div class="ui" style="padding:1px 2px;text-align:center;padding-left:0;padding-right:0">EINFG</div></div>
<div class="a sunk1" style="left:595px;top:806px;width:35px;height:19px;"><div class="ui" style="padding:1px 2px;text-align:center;padding-left:0;padding-right:0">STD</div></div>
<div class="a sunk1" style="left:633px;top:806px;width:27px;height:19px;"><div class="ui" style="padding:1px 2px;text-align:center;padding-left:0;padding-right:0">HYP</div></div>
<div class="a sunk1" style="left:664px;top:806px;width:10px;height:19px;"><div class="ui" style="padding:1px 2px;"></div></div>
<div class="a sunk1" style="left:678px;top:806px;width:346px;height:19px;"><div class="ui" style="padding:1px 2px;"></div></div>
</div>
<!-- NAVIGATOR -->
<div id="nav" class="a" style="left:0;top:0;width:0;height:0">
<div class="a " style="left:797px;top:41px;width:297px;height:286px;background:linear-gradient(90deg,#6e6e6e,#9c9c9c 3px,#9c9c9c);box-shadow:inset -1px -1px 0 #222"></div>
<div class="a tbar" style="left:797px;top:41px;width:297px;height:20px;"></div>
<div class="a ball" style="left:802px;top:45px;width:12px;height:12px;"></div>
<div class="a pill" style="left:822px;top:45px;width:253px;height:13px;"></div>
<div class="a ttl" style="left:829px;top:45.5px;">Navigator</div>
<div class="a xbtn" style="left:1078px;top:45px;width:12px;height:12px;"></div>
<svg class="a" style="left:1078px;top:45px" width="12" height="12"><path d="M3.500 3.500l5 5M8.500 3.500l-5 5" stroke="#222" stroke-width="1.800"/></svg>
<div class="a face" style="left:800px;top:60px;width:293px;height:266px;border:1px solid #222;border-right-color:#fff;border-bottom-color:#fff"></div>
<svg class="a" style="left:810px;top:69px" width="16" height="16" viewBox="0 0 16 16" shape-rendering="crispEdges"><rect x="1" y="2" width="7" height="7" fill="#808080"/><path d="M6 7l4 2-3 1 4 2-3 1 3 2" stroke="#808080" fill="none"/><path d="M7 8l4 2-3 1 4 2-3 1 3 2" stroke="#fff" fill="none" stroke-width=".7"/></svg>
<svg class="a" style="left:832px;top:69px" width="16" height="16" viewBox="0 0 16 16" shape-rendering="crispEdges"><circle cx="8" cy="8" r="6" fill="#fff" stroke="#000" stroke-width="1.600"/><path d="M6.500 5l3 3-3 3" fill="none" stroke="#00a" stroke-width="1.800"/></svg>
<svg class="a" style="left:855px;top:69px" width="16" height="16" viewBox="0 0 16 16" shape-rendering="crispEdges"><path d="M5 3.500l3-3 3 3z" fill="#00a"/><path d="M0 8l6 3.500-6 4zM16 8l-6 3.500 6 4z" fill="#000"/><path d="M1 6.500h14" stroke="#000" stroke-dasharray="1 1.500"/><path d="M6 11.500h4" stroke="#000" stroke-dasharray="1 1"/></svg>
<svg class="a" style="left:878px;top:69px" width="16" height="16" viewBox="0 0 16 16" shape-rendering="crispEdges"><path d="M5 12.500l3 3 3-3z" fill="#00a"/><path d="M0 1l6 3.500-6 4zM16 1l-6 3.500 6 4z" fill="#000"/><path d="M1 10.500h14" stroke="#000" stroke-dasharray="1 1.500"/><path d="M6 4.500h4" stroke="#000" stroke-dasharray="1 1"/></svg>
<svg class="a" style="left:973px;top:69px" width="16" height="16" viewBox="0 0 16 16" shape-rendering="crispEdges"><path d="M9 0h7l-3.500 4z" fill="#0c0" stroke="#060" stroke-width=".5"/><ellipse cx="5" cy="11.500" rx="3" ry="2.300" transform="rotate(-40 5 11.500)" fill="#fff" stroke="#000" stroke-width="1.600"/><ellipse cx="9.500" cy="7" rx="3" ry="2.300" transform="rotate(-40 9.500 7)" fill="none" stroke="#000" stroke-width="1.600"/></svg>
<svg class="a" style="left:1003px;top:69px" width="16" height="16" viewBox="0 0 16 16" shape-rendering="crispEdges"><path d="M1 3.500h8M1 5.500h6M1 7.500h8M1 9.500h6M1 11.500h8M1 13.500h6" stroke="#fff"/><path d="M10 11l3-3 3 3M10 14l3-3 3 3" fill="none" stroke="#fff"/><path d="M1 3h8M1 5h6M1 7h8M1 9h6M1 11h8M1 13h6" stroke="#aaa" stroke-width=".5"/></svg>
<svg class="a" style="left:1026px;top:69px" width="16" height="16" viewBox="0 0 16 16" shape-rendering="crispEdges"><path d="M1 3.500h8M1 5.500h6M1 7.500h8M1 9.500h6M1 11.500h8M1 13.500h6" stroke="#fff"/><path d="M10 2l3 3 3-3M10 5l3 3 3-3" fill="none" stroke="#fff"/><path d="M1 3h8M1 5h6M1 7h8M1 9h6M1 11h8M1 13h6" stroke="#aaa" stroke-width=".5"/></svg>
<div class="a sunk" style="left:906px;top:66px;width:53px;height:20px;"></div>
<div class="a ui" style="left:911px;top:68px;">1</div>
<div class="a rais" style="left:942px;top:68px;width:15px;height:8px;"></div>
<div class="a rais" style="left:942px;top:76px;width:15px;height:8px;"></div>
<div class="a" style="left:947px;top:70px;width:0;height:0;border:2.500px solid transparent;border-bottom:3px solid #000;border-top:0"></div>
<div class="a" style="left:947px;top:79px;width:0;height:0;border:2.500px solid transparent;border-top:3px solid #000;border-bottom:0"></div>
<div class="a vsep" style="left:993px;top:65px;width:2px;height:46px;"></div>
<div class="a pressed" style="left:806px;top:88px;width:24px;height:23px;"></div>
<svg class="a" style="left:810px;top:91px" width="16" height="16" viewBox="0 0 16 16" shape-rendering="crispEdges"><rect x=".8" y="2.800" width="14.400" height="10.400" fill="#fff" stroke="#000" stroke-width="1.300"/><path d="M1 4.500h14" stroke="#00a" stroke-width="2.500"/><rect x="2.500" y="7" width="11" height="5" fill="#ccc" stroke="#000" stroke-dasharray="1 1"/></svg>
<svg class="a" style="left:832px;top:91px" width="16" height="16" viewBox="0 0 16 16" shape-rendering="crispEdges"><rect x=".8" y="2.800" width="14.400" height="10.400" fill="#fff" stroke="#000" stroke-width="1.300"/><path d="M1 4.500h14" stroke="#00a" stroke-width="2.500"/><path d="M4 7l5 5M9 8.500v3.500h-3.500" fill="none" stroke="#00a" stroke-width="1.300"/></svg>
<svg class="a" style="left:863px;top:91px" width="16" height="16" viewBox="0 0 16 16" shape-rendering="crispEdges"><path d="M4.500 1.500h6v9l-3 4-3-4z" fill="#fff" stroke="#000" stroke-width="1.300"/><path d="M4.500 2v8l3 3" fill="none" stroke="#cc0" stroke-width="1.500"/><path d="M7.500 4v6" stroke="#000"/></svg>
<svg class="a" style="left:894px;top:91px" width="16" height="16" viewBox="0 0 16 16" shape-rendering="crispEdges"><rect x=".5" y="1.500" width="9" height="4" fill="#fff" stroke="#000" stroke-width="1.300"/><path d="M1.500 5v10" stroke="#000" stroke-width="1.300"/><path d="M3 8.500h12M3 10.500h12M3 12.500h12M3 14.500h12" stroke="#999"/><rect x="9.500" y=".5" width="6" height="7" fill="#fff" stroke="#00a"/><path d="M11 3.500l1.500-2 1.500 2zM11 4.500l1.500 2 1.500-2z" fill="#00a"/></svg>
<svg class="a" style="left:917px;top:91px" width="16" height="16" viewBox="0 0 16 16" shape-rendering="crispEdges"><rect x=".5" y="11.500" width="15" height="3.500" fill="#fff" stroke="#000" stroke-width="1.300"/><path d="M1.500 1v11" stroke="#000" stroke-width="1.300"/><path d="M3 2.500h6M3 4.500h6M3 6.500h6M3 8.500h12M3 10.500h12" stroke="#999"/><rect x="9.500" y=".5" width="6" height="7" fill="#fff" stroke="#00a"/><path d="M11 3.500l1.500-2 1.500 2zM11 4.500l1.500 2 1.500-2z" fill="#00a"/></svg>
<svg class="a" style="left:940px;top:91px" width="16" height="16" viewBox="0 0 16 16" shape-rendering="crispEdges"><rect x=".5" y="1.500" width="15" height="13.500" fill="#c0c0c0" stroke="#000" stroke-width="1.300"/><rect x="1" y="11.500" width="14" height="3" fill="#fff"/><path d="M2 4.500h7M2 6.500h7M2 8.500h3" stroke="#999"/><rect x="9.500" y=".5" width="6" height="7" fill="#fff" stroke="#00a"/><path d="M11 3.500l1.500-2 1.500 2zM11 4.500l1.500 2 1.500-2z" fill="#00a"/><path d="M6.500 5v7.500M6.500 5l2.500 2" stroke="#00a" stroke-width="1.500" fill="none"/><ellipse cx="5" cy="12.500" rx="2" ry="1.500" fill="#00a"/></svg>
<svg class="a" style="left:973px;top:91px" width="16" height="16" viewBox="0 0 16 16" shape-rendering="crispEdges"><path d="M9 0h7l-3.500 4z" fill="#0c0" stroke="#060" stroke-width=".5"/><path d="M0 3h2M3 3h9M3 6h10M5 9h8M5 12h8" stroke="#00a" stroke-width="2"/><path d="M6 14.500h8" stroke="#00a" stroke-dasharray="1 1"/></svg>
<svg class="a" style="left:1003px;top:91px" width="16" height="16" viewBox="0 0 16 16" shape-rendering="crispEdges"><path d="M5 2.500h8M6 4.500h7M5 6.500h9M6 8.500h7M5 10.500h8M6 12.500h7" stroke="#fff"/><path d="M4 2l-2.500 2.500 2.500 2.500M6.500 2l-2.500 2.500 2.500 2.500" fill="none" stroke="#aaa" stroke-width=".8"/></svg>
<svg class="a" style="left:1026px;top:91px" width="16" height="16" viewBox="0 0 16 16" shape-rendering="crispEdges"><path d="M1 2.500h8M1 4.500h7M1 6.500h8M1 8.500h7M1 10.500h8M1 12.500h7" stroke="#fff"/><path d="M10 2l2.500 2.500-2.500 2.500M12.500 2l2.500 2.500-2.500 2.500" fill="none" stroke="#aaa" stroke-width=".8"/></svg>
<div class="a vsep" style="left:854px;top:88px;width:2px;height:23px;"></div>
<div class="a vsep" style="left:885px;top:88px;width:2px;height:23px;"></div>
<div class="a vsep" style="left:962px;top:88px;width:2px;height:23px;"></div>
<div class="a sunk" style="left:806px;top:122px;width:279px;height:170px;overflow:hidden">
<svg class="a" style="left:8px;top:5px" width="9" height="9" shape-rendering="crispEdges"><rect x=".5" y=".5" width="8" height="8" fill="#fff" stroke="#000"/><path d="M2 4.500h5M4.500 2v5" stroke="#000"/></svg>
<svg class="a" style="left:24px;top:2px" width="16" height="16" viewBox="0 0 16 16" shape-rendering="crispEdges"><path d="M1 1.500h2" stroke="#a00"/><path d="M4 1.500h11" stroke="#a00" stroke-width="2"/><path d="M5 4.500h10M5 6.500h10M5 8.500h10M5 10.500h10M5 12.500h10M5 14.500h10" stroke="#808080"/></svg>
<div class="a " style="left:45px;top:1px;width:86px;height:18px;background:#000080"></div>
<div class="a ui" style="left:46px;top:1px;color:#fff;line-height:18px">Überschriften</div>
<svg class="a" style="left:8px;top:23px" width="9" height="9" shape-rendering="crispEdges"><rect x=".5" y=".5" width="8" height="8" fill="#fff" stroke="#000"/><path d="M2 4.500h5M4.500 2v5" stroke="#000"/></svg>
<svg class="a" style="left:24px;top:20px" width="16" height="16" viewBox="0 0 16 16" shape-rendering="crispEdges"><rect x=".8" y=".8" width="14.400" height="14.400" fill="#fff" stroke="#000" stroke-width="1.600"/><path d="M1 5h14M1 8.500h14M1 12h14M5.500 1v14M10.500 1v14" stroke="#000" stroke-width="1.300"/></svg>
<div class="a ui" style="left:46px;top:19px;line-height:18px">Tabellen</div>
<svg class="a" style="left:24px;top:38px" width="16" height="16" viewBox="0 0 16 16" shape-rendering="crispEdges"><rect x="1.500" y="2.500" width="13" height="11" fill="#fff" stroke="#00a" stroke-width="1.200" stroke-dasharray="2 1.500"/></svg>
<div class="a ui" style="left:46px;top:37px;line-height:18px">Textrahmen</div>
<svg class="a" style="left:8px;top:59px" width="9" height="9" shape-rendering="crispEdges"><rect x=".5" y=".5" width="8" height="8" fill="#fff" stroke="#000"/><path d="M2 4.500h5M4.500 2v5" stroke="#000"/></svg>
<svg class="a" style="left:24px;top:56px" width="16" height="16" viewBox="0 0 16 16" shape-rendering="crispEdges"><circle cx="10.500" cy="5" r="4" fill="#ffff80" stroke="#000" stroke-width=".8"/><rect x="1.500" y="4.500" width="7" height="6" fill="#a4a" stroke="#000" stroke-width=".8"/><path d="M2 15l5-6 5 6z" fill="#0cc" stroke="#000" stroke-width=".8"/></svg>
<div class="a ui" style="left:46px;top:55px;line-height:18px">Grafiken</div>
<svg class="a" style="left:24px;top:74px" width="16" height="16" viewBox="0 0 16 16" shape-rendering="crispEdges"><circle cx="6.500" cy="9" r="6" fill="#ffff80" stroke="#000"/><path d="M6.500 9v-6a6 6 0 0 1 6 6z" fill="#0cc" stroke="#000" stroke-width=".7"/><path d="M6.500 9h6a6 6 0 0 1-5 6z" fill="#a4a" stroke="#000" stroke-width=".7"/><path d="M12 1l3 3M15 1l-3 3" stroke="#000"/></svg>
<div class="a ui" style="left:46px;top:73px;line-height:18px">OLE-Objekte</div>
<svg class="a" style="left:24px;top:92px" width="16" height="16" viewBox="0 0 16 16" shape-rendering="crispEdges"><path d="M0 8.500h7" stroke="#000" stroke-width="1.300"/><path d="M7 5.500h2v1.500h4v-2h1.500v7h-1.500v-2h-4v1.500h-2z" fill="#ff0" stroke="#000"/></svg>
<div class="a ui" style="left:46px;top:91px;line-height:18px">Textmarken</div>
<svg class="a" style="left:24px;top:110px" width="16" height="16" viewBox="0 0 16 16" shape-rendering="crispEdges"><path d="M3 2.500h10M3 4.500h10" stroke="#808080"/><path d="M1 7.500h14M1 9.500h14M1 11.500h14M1 13.500h14" stroke="#00a"/></svg>
<div class="a ui" style="left:46px;top:109px;line-height:18px">Bereiche</div>
<svg class="a" style="left:8px;top:131px" width="9" height="9" shape-rendering="crispEdges"><rect x=".5" y=".5" width="8" height="8" fill="#fff" stroke="#000"/><path d="M2 4.500h5M4.500 2v5" stroke="#000"/></svg>
<svg class="a" style="left:24px;top:128px" width="16" height="16" viewBox="0 0 16 16" shape-rendering="crispEdges"><ellipse cx="5" cy="10.500" rx="3.200" ry="2.300" transform="rotate(-40 5 10.500)" fill="#fff" stroke="#000" stroke-width="1.500"/><ellipse cx="10" cy="6" rx="3.200" ry="2.300" transform="rotate(-40 10 6)" fill="#fff" stroke="#000" stroke-width="1.500"/><path d="M6 9.500l3-2.500" stroke="#000" stroke-width="1.500"/></svg>
<div class="a ui" style="left:46px;top:127px;line-height:18px">Hyperlinks</div>
<svg class="a" style="left:8px;top:149px" width="9" height="9" shape-rendering="crispEdges"><rect x=".5" y=".5" width="8" height="8" fill="#fff" stroke="#000"/><path d="M2 4.500h5M4.500 2v5" stroke="#000"/></svg>
<svg class="a" style="left:24px;top:146px" width="16" height="16" viewBox="0 0 16 16" shape-rendering="crispEdges"><path d="M1 2.500h7M1 4.500h7" stroke="#808080"/><path d="M1 6.500h7" stroke="#a4a" stroke-dasharray="1 1"/><path d="M1 8.500h7M1 10.500h7M1 12.500h7" stroke="#808080"/><path d="M10.500 6v5" stroke="#00a" stroke-width="1.500"/><path d="M8 9.500h5.500l-2.800 3z" fill="#00a"/><path d="M9 13.500h6M9 15.500h6" stroke="#00a"/></svg>
<div class="a ui" style="left:46px;top:145px;line-height:18px">Referenzen</div>
<svg class="a" style="left:24px;top:164px" width="16" height="16" viewBox="0 0 16 16" shape-rendering="crispEdges"><path d="M3 2.500h10M3 4.500h10" stroke="#808080"/><path d="M1 7.500h14M1 9.500h14M1 11.500h14M1 13.500h14" stroke="#00a"/></svg>
<div class="a ui" style="left:46px;top:163px;line-height:18px">Verzeichnisse</div>
<div class="a " style="left:261px;top:0px;width:17px;height:168px;background:#c0c0c0"></div>
<div class="a rais" style="left:261px;top:0px;width:17px;height:17px;"></div>
<div class="a" style="left:265px;top:6px;width:0;height:0;border:4px solid transparent;border-bottom:4px solid #808080;border-top:0"></div>
<div class="a rais" style="left:261px;top:17px;width:17px;height:97px;"></div>
<div class="a rais" style="left:261px;top:151px;width:17px;height:17px;"></div>
<div class="a" style="left:265px;top:158px;width:0;height:0;border:4px solid transparent;border-top:4px solid #000;border-bottom:0"></div>
</div>
<div class="a sunk" style="left:806px;top:297px;width:279px;height:22px;"></div><div class="a ui" style="left:810px;top:300px;width:256px;overflow:hidden">Endspurt-20_PDF_1.sxw (aktiv)</div><div class="a rais" style="left:1066px;top:299px;width:17px;height:18px;"></div><div class="a" style="left:1070.5px;top:306px;width:0;height:0;border:4px solid transparent;border-top:4px solid #000;border-bottom:0"></div>
</div>
<!-- STYLIST -->
<div id="sty" class="a" style="left:0;top:0;width:0;height:0">
<div class="a " style="left:819px;top:361px;width:259px;height:424px;background:linear-gradient(90deg,#6e6e6e,#9c9c9c 3px,#9c9c9c);box-shadow:inset -1px -1px 0 #222"></div>
<div class="a tbar" style="left:819px;top:361px;width:259px;height:20px;"></div>
<div class="a ball" style="left:824px;top:365px;width:12px;height:12px;"></div>
<div class="a pill" style="left:844px;top:365px;width:214px;height:13px;"></div>
<div class="a ttl" style="left:851px;top:365.5px;">Absatzvorlagen</div>
<div class="a xbtn" style="left:1061px;top:365px;width:12px;height:12px;"></div>
<svg class="a" style="left:1061px;top:365px" width="12" height="12"><path d="M3.500 3.500l5 5M8.500 3.500l-5 5" stroke="#222" stroke-width="1.800"/></svg>
<div class="a face" style="left:822px;top:380px;width:255px;height:404px;border:1px solid #222;border-right-color:#fff;border-bottom-color:#fff"></div>
<div class="a pressed" style="left:825px;top:382px;width:23px;height:24px;"></div>
<svg class="a" style="left:828px;top:386px" width="16" height="16" viewBox="0 0 16 16" shape-rendering="crispEdges"><rect x="2.500" y=".8" width="13" height="14.400" fill="#c0c0c0" stroke="#000" stroke-width="1.500"/><path d="M.5 2.500h3M.5 4.500h3M.5 6.500h3M.5 8.500h3M.5 10.500h3M.5 12.500h3M.5 14h3" stroke="#000" stroke-width=".9"/><path d="M7 4.500h6M9.500 4.500v8M11.500 4.500v8" stroke="#000" stroke-width="1" fill="none"/><path d="M9.500 4.500h-1a2 2 0 0 0 0 4h1z" fill="#000"/></svg>
<svg class="a" style="left:851px;top:386px" width="16" height="16" viewBox="0 0 16 16" shape-rendering="crispEdges"><rect x="2.500" y=".8" width="13" height="14.400" fill="#c0c0c0" stroke="#000" stroke-width="1.500"/><path d="M.5 2.500h3M.5 4.500h3M.5 6.500h3M.5 8.500h3M.5 10.500h3M.5 12.500h3M.5 14h3" stroke="#000" stroke-width=".9"/><path d="M5.500 12l3.500-8 3.500 8M7 9.500h4.500" fill="none" stroke="#00a" stroke-width="1.500"/></svg>
<svg class="a" style="left:874px;top:386px" width="16" height="16" viewBox="0 0 16 16" shape-rendering="crispEdges"><rect x="2.500" y=".8" width="13" height="14.400" fill="#c0c0c0" stroke="#000" stroke-width="1.500"/><path d="M.5 2.500h3M.5 4.500h3M.5 6.500h3M.5 8.500h3M.5 10.500h3M.5 12.500h3M.5 14h3" stroke="#000" stroke-width=".9"/><rect x="5" y="3" width="9" height="10" fill="#fff" stroke="#00a" stroke-dasharray="1 1"/></svg>
<svg class="a" style="left:897px;top:386px" width="16" height="16" viewBox="0 0 16 16" shape-rendering="crispEdges"><rect x="2.500" y=".8" width="13" height="14.400" fill="#c0c0c0" stroke="#000" stroke-width="1.500"/><path d="M.5 2.500h3M.5 4.500h3M.5 6.500h3M.5 8.500h3M.5 10.500h3M.5 12.500h3M.5 14h3" stroke="#000" stroke-width=".9"/><path d="M5.500 3.500h5l3 3v6.500h-8z" fill="#fff" stroke="#00a"/><path d="M10.500 3.500v3h3" fill="none" stroke="#00a"/></svg>
<svg class="a" style="left:920px;top:386px" width="16" height="16" viewBox="0 0 16 16" shape-rendering="crispEdges"><rect x="2.500" y=".8" width="13" height="14.400" fill="#c0c0c0" stroke="#000" stroke-width="1.500"/><path d="M.5 2.500h3M.5 4.500h3M.5 6.500h3M.5 8.500h3M.5 10.500h3M.5 12.500h3M.5 14h3" stroke="#000" stroke-width=".9"/><path d="M5.500 3.500h2M5.500 6.500h2M5.500 9.500h2M5.500 12.500h2" stroke="#00a" stroke-width="1.600"/><path d="M9 3.500h4.500M9 6.500h4.500M9 9.500h4.500M9 12.500h4.500" stroke="#00a"/></svg>
<svg class="a" style="left:1005px;top:386px" width="16" height="16" viewBox="0 0 16 16" shape-rendering="crispEdges"><g shape-rendering="geometricPrecision"><path d="M6 3.500l8.500 5-4.500 6.500-8-5z" fill="#fff" stroke="#00a" stroke-width="1.500"/><path d="M7.500 8l4.500 2.700M6.500 9.800l4.500 2.700M8.700 6.200l4.500 2.700" stroke="#00a" stroke-width=".9"/><path d="M2.500 3c-2 4-1.500 8 .5 12" fill="none" stroke="#00a" stroke-width="1.700"/><path d="M5 4.500c-1-3.500 4-5 5.500-1" fill="none" stroke="#000" stroke-width="1.300"/></g></svg>
<svg class="a" style="left:1028px;top:386px" width="16" height="16" viewBox="0 0 16 16" shape-rendering="crispEdges"><path d="M2 3.500h5.500M4.500 3.500v8.500M6.500 3.500v8.500" stroke="#000" stroke-width="1" fill="none"/><path d="M4.500 3.500h-1a1.800 1.800 0 0 0 0 3.600h1z" fill="#000"/><path d="M9 2.500h6M9 4.500h6M9 6.500h6M9 8.500h6M9 10.500h6M9 12.500h6" stroke="#00a"/></svg>
<svg class="a" style="left:1051px;top:386px" width="16" height="16" viewBox="0 0 16 16" shape-rendering="crispEdges"><rect x="0" y="1" width="16" height="14" fill="#000"/><path d="M2 4.500h5.500M4.500 4.500v7.500M6.500 4.500v7.500" stroke="#fff" stroke-width="1" fill="none"/><path d="M4.500 4.500h-1a1.600 1.600 0 0 0 0 3.200h1z" fill="#fff"/><path d="M9.500 3.500h5M9.500 5.500h5M9.500 7.500h5M9.500 9.500h5M9.500 11.500h5M9.500 13.500h5" stroke="#fff"/></svg>
<div class="a sunk" style="left:825px;top:408px;width:246px;height:345px;overflow:hidden">
<div class="a ui" style="left:3px;top:1px;line-height:15px">Gegenüberstellung</div>
<div class="a ui" style="left:3px;top:16px;line-height:15px">Grußformel</div>
<div class="a ui" style="left:3px;top:31px;line-height:15px">Marginalie</div>
<div class="a ui" style="left:3px;top:46px;line-height:15px">Standard</div>
<div class="a " style="left:2px;top:61px;width:72px;height:15px;background:#000080;outline:1px dotted #ff8;outline-offset:-1px"></div>
<div class="a ui" style="left:3px;top:61px;color:#fff;line-height:15px">Textkörper</div>
<div class="a ui" style="left:3px;top:76px;line-height:15px">Textkörper Einrückung</div>
<div class="a ui" style="left:3px;top:91px;line-height:15px">Textkörper Einzug</div>
<div class="a ui" style="left:3px;top:106px;line-height:15px">Textkörper Einzug negativ</div>
<div class="a ui" style="left:3px;top:121px;line-height:15px">Überschrift</div>
<div class="a ui" style="left:3px;top:136px;line-height:15px">Überschrift 1</div>
<div class="a ui" style="left:3px;top:151px;line-height:15px">Überschrift 10</div>
<div class="a ui" style="left:3px;top:166px;line-height:15px">Überschrift 2</div>
<div class="a ui" style="left:3px;top:181px;line-height:15px">Überschrift 3</div>
<div class="a ui" style="left:3px;top:196px;line-height:15px">Überschrift 4</div>
<div class="a ui" style="left:3px;top:211px;line-height:15px">Überschrift 5</div>
<div class="a ui" style="left:3px;top:226px;line-height:15px">Überschrift 6</div>
<div class="a ui" style="left:3px;top:241px;line-height:15px">Überschrift 7</div>
<div class="a ui" style="left:3px;top:256px;line-height:15px">Überschrift 8</div>
<div class="a ui" style="left:3px;top:271px;line-height:15px">Überschrift 9</div>
<div class="a ui" style="left:3px;top:286px;line-height:15px">Unterschrift</div>
</div>
<div class="a sunk" style="left:825px;top:757px;width:246px;height:22px;"></div><div class="a ui" style="left:829px;top:760px;width:223px;overflow:hidden">Automatisch</div><div class="a rais" style="left:1052px;top:759px;width:17px;height:18px;"></div><div class="a" style="left:1056.5px;top:766px;width:0;height:0;border:4px solid transparent;border-top:4px solid #000;border-bottom:0"></div>
</div>
<!-- DESKTOP ICONS -->
<div id="desk" class="a" style="left:0;top:0;width:0;height:0">
<svg width="0" height="0" style="position:absolute"><defs>
<linearGradient id="hd1" x1="0" x2="1" y1="0" y2="1"><stop offset="0" stop-color="#d4d4d8"/><stop offset=".5" stop-color="#b0b0b6"/><stop offset="1" stop-color="#8e8e96"/></linearGradient>
<linearGradient id="hd2" x1="0" x2="0" y1="0" y2="1"><stop offset="0" stop-color="#9a9aa0"/><stop offset="1" stop-color="#5c5c64"/></linearGradient>
<linearGradient id="pp" x1="0" x2="1" y1="0" y2="1"><stop offset="0" stop-color="#fdfdfd"/><stop offset="1" stop-color="#e2e2e2"/></linearGradient>
<linearGradient id="fo" x1="0" x2="0" y1="0" y2="1"><stop offset="0" stop-color="#a8d0f4"/><stop offset=".5" stop-color="#7ab0e8"/><stop offset="1" stop-color="#4a88d0"/></linearGradient>
<linearGradient id="ph" x1="0" x2="0" y1="0" y2="1"><stop offset="0" stop-color="#3a6ad8"/><stop offset=".6" stop-color="#6a9ae8"/><stop offset="1" stop-color="#c8d8f0"/></linearGradient>
<g id="hdd"><path d="M4.500 0h36l4 34h-44z" fill="url(#hd1)"/><path d="M.5 34h44v6.500q0 1-1 1h-42q-1 0-1-1z" fill="url(#hd2)"/><path d="M5 35.500h14v5h-14z" fill="#50505a" opacity=".6"/><path d="M20 35v6M23 35v6M26 35v6M29 35v6" stroke="#444" stroke-width="1.200"/><circle cx="35.500" cy="38.500" r=".9" fill="#e8e000"/><ellipse cx="22" cy="20" rx="16.500" ry="12.500" fill="#b8b8be" stroke="#d0d0d6" stroke-width=".8"/><path d="M5.800 23a16.500 12.500 0 0 0 28 7" fill="none" stroke="#ececf0" stroke-width="1.300"/><ellipse cx="22" cy="19.500" rx="5.500" ry="4.200" fill="#b4b4ba" stroke="#c8c8ce" stroke-width=".8"/><path d="M16.500 20a5.500 4.200 0 0 0 11 0" fill="none" stroke="#f0f0f4" stroke-width="1.100"/><rect x="9" y="1.500" width="20" height="3.500" fill="#2a2a2e"/><path d="M8 6.500h23" stroke="#e8e8ec" stroke-width="1.500"/><path d="M37.500 3l1.500 22" stroke="#88888e" stroke-width="1.200"/><circle cx="5" cy="14" r=".9" fill="#555"/><circle cx="39.500" cy="14" r=".9" fill="#555"/><circle cx="3" cy="32" r=".9" fill="#555"/><circle cx="41.500" cy="32" r=".9" fill="#555"/></g>
<g id="paper"><path d="M0 0h22l12 12v32h-34z" fill="url(#pp)"/><path d="M22 0v9q0 3 3 3h9z" fill="#c8c8c8"/><path d="M22 0l12 12h-8q-4 0-4-4z" fill="#f4f4f4" opacity=".9"/></g>
<g id="photo"><g transform="rotate(-24 17 22)"><rect x="7" y="13" width="20" height="16" fill="#c8b088" stroke="#f4f0e8" stroke-width="1.200" transform="rotate(10 17 21) translate(1,-3)"/><rect x="6" y="13" width="21" height="17" fill="url(#ph)" stroke="#fafafa" stroke-width="1.600"/><path d="M15 30v-6q0-2 2-2h1q2 0 2 2v6z" fill="#333"/><circle cx="17.500" cy="19.500" r="2.300" fill="#7a5a48"/><path d="M20 24l7-4v6z" fill="#dde8f8" opacity=".8"/></g></g>
</defs></svg>
<svg class="a" style="left:1167px;top:37px" width="45" height="42"><use href="#hdd"/></svg>
<div class="a lbl" style="left:1110px;top:87.5px;width:160px">Panther</div>
<svg class="a" style="left:1167px;top:135px" width="45" height="42"><use href="#hdd"/></svg>
<div class="a lbl" style="left:1110px;top:185.5px;width:160px">Daten</div>
<svg class="a" style="left:1167px;top:233px" width="45" height="42"><use href="#hdd"/></svg>
<div class="a lbl" style="left:1110px;top:283.5px;width:160px">Jaguar</div>
<svg class="a" style="left:1173px;top:329px" width="34" height="44"><use href="#paper"/><path d="M15.500 0v26" stroke="#555" stroke-width="3" stroke-dasharray="1 1"/><path d="M15.500 0v26" stroke="#bbb" stroke-width="1"/><rect x="13.500" y="24" width="4" height="8" rx="2" fill="none" stroke="#999" stroke-width="1.200"/><text x="17" y="41.500" text-anchor="middle" font-family="DejaVu Sans, sans-serif" font-weight="bold" font-size="6.500" fill="#8a8a8a">ZIP</text></svg>
<div class="a lbl" style="left:1110px;top:381.5px;width:160px">5_1024x768.zip</div>
<svg class="a" style="left:1169px;top:427px" width="46" height="45"><path d="M2 6l12-3 2 3 22-4v34l-32 7z" fill="#e8e8e8" stroke="#aaa" stroke-width=".6"/><path d="M2 8v35" stroke="#ccc" stroke-width="2" stroke-dasharray="1 1"/><path d="M5 12l39-7.500q1 0 1 1l-2 27q0 1.500-1.500 2l-36.500 8.500z" fill="url(#fo)" stroke="#5a8ac8" stroke-width=".7"/><path d="M5.500 15l38-7M5.500 18l38-7M5.500 21l38-7M5.500 24l38-7M5.500 27l38-7M5.500 30l38-7M5.500 33l38-7M5.500 36l37-7M5.500 39l37-7" stroke="#fff" stroke-width=".7" opacity=".45"/></svg>
<div class="a lbl" style="left:1110px;top:479.5px;width:160px">Altes Home</div>
<svg class="a" style="left:1173px;top:525px" width="34" height="44"><use href="#paper"/><use href="#photo"/><text x="17" y="41.500" text-anchor="middle" font-family="DejaVu Sans, sans-serif" font-size="6.500" fill="#777">PDF</text></svg>
<div class="a lbl" style="left:1110px;top:577.5px;width:160px">Bild 1</div>
<svg class="a" style="left:1173px;top:623px" width="34" height="44"><use href="#paper"/><use href="#photo"/><text x="17" y="41.500" text-anchor="middle" font-family="DejaVu Sans, sans-serif" font-size="6.500" fill="#777">PNG</text></svg>
<div class="a lbl" style="left:1110px;top:675.5px;width:160px">FreeSnap001.png</div>
<svg class="a" style="left:1173px;top:721px" width="34" height="44"><use href="#paper"/><use href="#photo"/><text x="17" y="41.500" text-anchor="middle" font-family="DejaVu Sans, sans-serif" font-size="6.500" fill="#777">PNG</text></svg>
<div class="a lbl" style="left:1110px;top:773.5px;width:160px">FreeSnap002.png</div>
<svg class="a" style="left:1173px;top:819px" width="34" height="44"><use href="#paper"/><use href="#photo"/><text x="17" y="41.500" text-anchor="middle" font-family="DejaVu Sans, sans-serif" font-size="6.500" fill="#777">PNG</text></svg>
<div class="a lbl" style="left:1110px;top:871.5px;width:160px">FreeSnap003.png</div>
<svg class="a" style="left:1173px;top:917px" width="34" height="35"><use href="#paper"/><use href="#photo"/><text x="17" y="41.500" text-anchor="middle" font-family="DejaVu Sans, sans-serif" font-size="6.500" fill="#777">PNG</text></svg>
</div>
<!-- MAC MENU BAR -->
<div id="mbar" class="a" style="left:0;top:0;width:1280px;height:22px;background:repeating-linear-gradient(#f6f6f6 0,#f6f6f6 1px,#ebebeb 1px,#ebebeb 2px);border-bottom:1px solid #9a9a9a;border-radius:6px 6px 0 0">
<svg class="a" style="left:18.500px;top:0" width="19" height="21" viewBox="0 0 18 20"><defs><linearGradient id="ap" x1="0" x2="0" y1="0" y2="1"><stop offset="0" stop-color="#2a6adf"/><stop offset=".45" stop-color="#4aa0f4"/><stop offset="1" stop-color="#1a6ad8"/></linearGradient></defs><path d="M9.3 5.2c.2-1.800 1.500-3.300 3.100-3.700.2 1.900-1.300 3.700-3.100 3.700zM9.200 6.100c1-.100 2-.9 3.300-.9 1.200 0 2.400.6 3.100 1.700-2.600 1.500-2.200 5.300.6 6.300-.6 1.700-2 4.300-3.700 4.300-1.100 0-1.500-.7-2.900-.7s-1.800.7-2.900.7c-2 0-4.700-4.100-4.700-7.500 0-3.100 2.100-4.800 4-4.800 1.300 0 2.300.9 3.200.9z" fill="url(#ap)" stroke="#1450b0" stroke-width=".5"/></svg>
<div class="a mm" style="left:54px;top:1px;font-weight:bold;font-size:13px">XDarwin</div>
<div class="a mm" style="left:133px;top:1px">Ablage</div>
<div class="a mm" style="left:198px;top:1px">Editieren</div>
<div class="a mm" style="left:276px;top:1px">Fenster</div>
<div class="a mm" style="left:345px;top:1px">Hilfe</div>
<svg class="a" style="left:1110px;top:3px" width="90" height="16" viewBox="1110 3 90 16"><path d="M1118 7l-4 4 4 4M1126 7l4 4-4 4" fill="none" stroke="#111" stroke-width="1.4"/><path d="M1119.500 11h1.500M1123 11h1.500" stroke="#666" stroke-width="1.2"/><path d="M1142 9h3l4-4v12l-4-4h-3z" fill="#111"/><path d="M1151 8.500a3.500 3.500 0 0 1 0 5M1153.200 6.500a6 6 0 0 1 0 9" fill="none" stroke="#111" stroke-width="1.200"/><path d="M1174 12.500l6-6.500 6 6.500zM1174 14.200h12v2h-12z" fill="#111"/></svg>
<div class="a mm" style="left:1205px;top:1px">Fr 19:15</div>
</div>
<!-- window-manager strips -->
<div class="a" style="left:0;top:22px;width:131px;height:15px;background:linear-gradient(rgba(255,255,255,0) 60%,rgba(0,0,0,.45)),repeating-linear-gradient(#efefef 0,#efefef 1px,#cfcfcf 1px,#cfcfcf 2px)"></div>
<div class="a" style="left:0;top:22px;width:15px;height:15px;background:#999"><div class="a" style="left:1px;top:1px;width:13px;height:13px;border-radius:50%;background:radial-gradient(circle at 50% 35%,#e8e8e8,#888)"></div><div class="a" style="left:3px;top:4px;width:0;height:0;border:5px solid transparent;border-bottom:6px solid #000;border-top:0"></div></div>
<div class="a" style="left:15px;top:22px;width:1px;height:15px;background:#111"></div>
<div class="a" style="left:871px;top:22px;width:393px;height:15px;background:linear-gradient(rgba(255,255,255,0) 60%,rgba(0,0,0,.45)),repeating-linear-gradient(#efefef 0,#efefef 1px,#cfcfcf 1px,#cfcfcf 2px)"></div>
<div class="a" style="left:1264px;top:22px;width:16px;height:15px;background:#888;border-left:1px solid #222"><div class="a" style="left:1px;top:1px;width:13px;height:13px;border-radius:50%;background:radial-gradient(circle at 50% 35%,#e8e8e8,#888)"></div><div class="a" style="left:3px;top:5px;width:0;height:0;border:5px solid transparent;border-top:6px solid #000;border-bottom:0"></div></div>
</body>
</html>
